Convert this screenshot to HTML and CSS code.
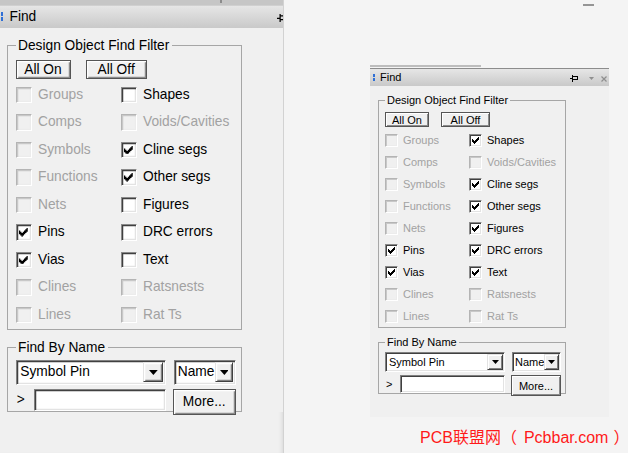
FILE: index.html
```html
<!DOCTYPE html>
<html>
<head>
<meta charset="utf-8">
<title>Find</title>
<link rel="stylesheet" href="styles.css">
</head>
<body>
<div class="page">
  <div class="left">
    <div class="strip"><i></i></div>
    <div class="panel big">
      <div class="title">
        <span class="grip"><i></i><i></i></span>
        <span class="tt">Find</span>
        <span class="tools">
          <svg class="pin" width="8" height="7" viewBox="0 0 8 7"><path d="M0 3h2v1H0zM2 0h1v7H2zM3 1h5v1H3zM3 4h5v1H3zM7 1h1v4H7z"/></svg>
          <svg class="drop" width="5" height="3" viewBox="0 0 5 3"><path d="M0 0h5L2.5 3z"/></svg>
          <svg class="close" width="6" height="6" viewBox="0 0 6 6"><path d="M0.5 0.5l5 5M5.5 0.5l-5 5"/></svg>
        </span>
      </div>
      <div class="pbody">
        <fieldset class="group filter">
          <legend>Design Object Find Filter</legend>
          <div class="btns"><button class="btn b-on">All On</button><button class="btn b-off">All Off</button></div>
          <div class="grid">
            <label class="cb dis"><span class="box"></span>Groups</label>
            <label class="cb"><span class="box"></span>Shapes</label>
            <label class="cb dis"><span class="box"></span>Comps</label>
            <label class="cb dis"><span class="box"></span>Voids/Cavities</label>
            <label class="cb dis"><span class="box"></span>Symbols</label>
            <label class="cb"><span class="box"><svg class="ck" width="7" height="7" viewBox="0 0 7 7"><path d="M0 2h1v3H0zM1 3h1v3H1zM2 4h1v3H2zM3 3h1v3H3zM4 2h1v3H4zM5 1h1v3H5zM6 0h1v3H6z"/></svg></span>Cline segs</label>
            <label class="cb dis"><span class="box"></span>Functions</label>
            <label class="cb"><span class="box"><svg class="ck" width="7" height="7" viewBox="0 0 7 7"><path d="M0 2h1v3H0zM1 3h1v3H1zM2 4h1v3H2zM3 3h1v3H3zM4 2h1v3H4zM5 1h1v3H5zM6 0h1v3H6z"/></svg></span>Other segs</label>
            <label class="cb dis"><span class="box"></span>Nets</label>
            <label class="cb"><span class="box"></span>Figures</label>
            <label class="cb"><span class="box"><svg class="ck" width="7" height="7" viewBox="0 0 7 7"><path d="M0 2h1v3H0zM1 3h1v3H1zM2 4h1v3H2zM3 3h1v3H3zM4 2h1v3H4zM5 1h1v3H5zM6 0h1v3H6z"/></svg></span>Pins</label>
            <label class="cb"><span class="box"></span>DRC errors</label>
            <label class="cb"><span class="box"><svg class="ck" width="7" height="7" viewBox="0 0 7 7"><path d="M0 2h1v3H0zM1 3h1v3H1zM2 4h1v3H2zM3 3h1v3H3zM4 2h1v3H4zM5 1h1v3H5zM6 0h1v3H6z"/></svg></span>Vias</label>
            <label class="cb"><span class="box"></span>Text</label>
            <label class="cb dis"><span class="box"></span>Clines</label>
            <label class="cb dis"><span class="box"></span>Ratsnests</label>
            <label class="cb dis"><span class="box"></span>Lines</label>
            <label class="cb dis"><span class="box"></span>Rat Ts</label>
          </div>
        </fieldset>
        <fieldset class="group byname">
          <legend>Find By Name</legend>
          <div class="row row1">
            <div class="combo c1"><span class="val">Symbol Pin</span><span class="dd"><svg width="7" height="4" viewBox="0 0 7 4"><path d="M0 0h7L3.5 4z"/></svg></span></div>
            <div class="combo c2"><span class="val">Name</span><span class="dd"><svg width="7" height="4" viewBox="0 0 7 4"><path d="M0 0h7L3.5 4z"/></svg></span></div>
          </div>
          <div class="row row2">
            <span class="prompt">&gt;</span>
            <span class="input"></span>
            <button class="btn more">More...</button>
          </div>
        </fieldset>
      </div>
    </div>
  </div>

  <div class="right">
    <div class="dash"></div>
    <div class="topline"></div>
    <div class="panel small">
      <div class="title">
        <span class="grip"><i></i><i></i></span>
        <span class="tt">Find</span>
        <span class="tools">
          <svg class="pin" width="8" height="7" viewBox="0 0 8 7"><path d="M0 3h2v1H0zM2 0h1v7H2zM3 1h5v1H3zM3 4h5v1H3zM7 1h1v4H7z"/></svg>
          <svg class="drop" width="5" height="3" viewBox="0 0 5 3"><path d="M0 0h5L2.5 3z"/></svg>
          <svg class="close" width="6" height="6" viewBox="0 0 6 6"><path d="M0.5 0.5l5 5M5.5 0.5l-5 5"/></svg>
        </span>
      </div>
      <div class="pbody">
        <fieldset class="group filter">
          <legend>Design Object Find Filter</legend>
          <div class="btns"><button class="btn b-on">All On</button><button class="btn b-off">All Off</button></div>
          <div class="grid">
            <label class="cb dis"><span class="box"></span>Groups</label>
            <label class="cb"><span class="box"><svg class="ck" width="7" height="7" viewBox="0 0 7 7"><path d="M0 2h1v3H0zM1 3h1v3H1zM2 4h1v3H2zM3 3h1v3H3zM4 2h1v3H4zM5 1h1v3H5zM6 0h1v3H6z"/></svg></span>Shapes</label>
            <label class="cb dis"><span class="box"></span>Comps</label>
            <label class="cb dis"><span class="box"></span>Voids/Cavities</label>
            <label class="cb dis"><span class="box"></span>Symbols</label>
            <label class="cb"><span class="box"><svg class="ck" width="7" height="7" viewBox="0 0 7 7"><path d="M0 2h1v3H0zM1 3h1v3H1zM2 4h1v3H2zM3 3h1v3H3zM4 2h1v3H4zM5 1h1v3H5zM6 0h1v3H6z"/></svg></span>Cline segs</label>
            <label class="cb dis"><span class="box"></span>Functions</label>
            <label class="cb"><span class="box"><svg class="ck" width="7" height="7" viewBox="0 0 7 7"><path d="M0 2h1v3H0zM1 3h1v3H1zM2 4h1v3H2zM3 3h1v3H3zM4 2h1v3H4zM5 1h1v3H5zM6 0h1v3H6z"/></svg></span>Other segs</label>
            <label class="cb dis"><span class="box"></span>Nets</label>
            <label class="cb"><span class="box"><svg class="ck" width="7" height="7" viewBox="0 0 7 7"><path d="M0 2h1v3H0zM1 3h1v3H1zM2 4h1v3H2zM3 3h1v3H3zM4 2h1v3H4zM5 1h1v3H5zM6 0h1v3H6z"/></svg></span>Figures</label>
            <label class="cb"><span class="box"><svg class="ck" width="7" height="7" viewBox="0 0 7 7"><path d="M0 2h1v3H0zM1 3h1v3H1zM2 4h1v3H2zM3 3h1v3H3zM4 2h1v3H4zM5 1h1v3H5zM6 0h1v3H6z"/></svg></span>Pins</label>
            <label class="cb"><span class="box"><svg class="ck" width="7" height="7" viewBox="0 0 7 7"><path d="M0 2h1v3H0zM1 3h1v3H1zM2 4h1v3H2zM3 3h1v3H3zM4 2h1v3H4zM5 1h1v3H5zM6 0h1v3H6z"/></svg></span>DRC errors</label>
            <label class="cb"><span class="box"><svg class="ck" width="7" height="7" viewBox="0 0 7 7"><path d="M0 2h1v3H0zM1 3h1v3H1zM2 4h1v3H2zM3 3h1v3H3zM4 2h1v3H4zM5 1h1v3H5zM6 0h1v3H6z"/></svg></span>Vias</label>
            <label class="cb"><span class="box"><svg class="ck" width="7" height="7" viewBox="0 0 7 7"><path d="M0 2h1v3H0zM1 3h1v3H1zM2 4h1v3H2zM3 3h1v3H3zM4 2h1v3H4zM5 1h1v3H5zM6 0h1v3H6z"/></svg></span>Text</label>
            <label class="cb dis"><span class="box"></span>Clines</label>
            <label class="cb dis"><span class="box"></span>Ratsnests</label>
            <label class="cb dis"><span class="box"></span>Lines</label>
            <label class="cb dis"><span class="box"></span>Rat Ts</label>
          </div>
        </fieldset>
        <fieldset class="group byname">
          <legend>Find By Name</legend>
          <div class="row row1">
            <div class="combo c1"><span class="val">Symbol Pin</span><span class="dd"><svg width="7" height="4" viewBox="0 0 7 4"><path d="M0 0h7L3.5 4z"/></svg></span></div>
            <div class="combo c2"><span class="val">Name</span><span class="dd"><svg width="7" height="4" viewBox="0 0 7 4"><path d="M0 0h7L3.5 4z"/></svg></span></div>
          </div>
          <div class="row row2">
            <span class="prompt">&gt;</span>
            <span class="input"></span>
            <button class="btn more">More...</button>
          </div>
        </fieldset>
      </div>
    </div>
    <div class="mark">PCB联盟网（<span class="site">Pcbbar.com</span><span class="close-paren">）</span></div>
  </div>
</div>
</body>
</html>
```

FILE: styles.css
```css
* { box-sizing: border-box; }
html, body { margin: 0; padding: 0; }
body {
  width: 628px;
  height: 453px;
  overflow: hidden;
  background: #f4f4f4;
  font-family: "Liberation Sans", Arial, sans-serif;
  font-size: 11px;
  color: #000;
}
.page { display: flex; height: 453px; }

/* left (enlarged) dock */
.left {
  width: 284px;
  flex: none;
  height: 453px;
  overflow: hidden;
  background: #f0f0f0;
  border-right: 1px solid #d2d2d2;
  box-shadow: inset -4px 0 4px -3px rgba(0,0,0,0.10);
}
.strip { height: 5px; background: #c6c6c6; padding-left: 220px; }
.strip i { display: block; width: 2px; height: 3px; background: #8c8c8c; }

.panel { background: #f0f0f0; width: 239px; }
.panel.big { zoom: 1.25; width: 263px; margin-left: -2.4px; }

.title {
  height: 18px;
  border-top: 1px solid #8c8c8c;
  background: linear-gradient(#e6e6e6, #c9c9c9);
  display: flex;
  align-items: center;
  padding-left: 3px;
}
.big .title { border-top-color: #d0d0d0; }
.grip { display: flex; flex-direction: column; gap: 1px; width: 2px; margin-right: 5px; }
.grip i { display: block; width: 2px; height: 3px; background: #2f6fd6; }
.tt { line-height: 13px; }
.tools { margin-left: auto; display: flex; align-items: center; padding-right: 2px; padding-top: 2px; }
.pin { margin-right: 11px; fill: #000; }
.drop { margin-right: 7px; fill: #8f8f8f; }
.close { stroke: #8f8f8f; stroke-width: 1.2; fill: none; }

.pbody { padding: 8px 0 0 8px; height: 331px; }
.big .pbody { height: auto; }

.group {
  margin: 0;
  padding: 5px 0 0 6px;
  border: 1px solid #a6a6a6;
  width: 188px;
  min-width: 0;
}
legend {
  padding: 0 2px;
  margin-left: 0;
  line-height: 13px;
  font-size: 11px;
}

.btns { display: flex; gap: 12px; height: 15px; }
.btn {
  font-family: "Liberation Sans", Arial, sans-serif;
  font-size: 11px;
  line-height: 12px;
  height: 15px;
  padding: 0;
  margin: 0;
  color: #000;
  background: #f0f0f0;
  border: 1px solid #555;
  box-shadow: inset 1px 1px 0 #fff, inset -1px -1px 0 #8c8c8c;
  border-radius: 0;
}
.b-on { width: 44px; }
.b-off { width: 49px; }

.grid {
  display: grid;
  grid-template-columns: 84px auto;
  grid-auto-rows: 22px;
  align-items: center;
  margin-top: 2px;
}
.cb { display: flex; align-items: center; gap: 5px; line-height: 13px; white-space: nowrap; }
.cb.dis { color: #a2a2a2; }
.box {
  width: 13px;
  height: 13px;
  flex: none;
  background: #fff;
  border: 1px solid;
  border-color: #8a8a8a #fff #fff #8a8a8a;
  box-shadow: inset 1px 1px 0 #404040, inset -1px -1px 0 #e3e3e3;
  display: flex;
  align-items: center;
  justify-content: center;
}
.dis .box {
  background: #f0f0f0;
  border-color: #b4b4b4 #fff #fff #b4b4b4;
  box-shadow: inset 1px 1px 0 #c8c8c8, inset -1px -1px 0 #ececec;
}
.ck { fill: #000; display: block; }

.byname { margin-top: 8px; padding: 3px 0 0 6px; }
.row { display: flex; align-items: flex-start; }
.row1 { gap: 7px; height: 20px; }
.row2 { margin-top: 3px; height: 18px; }

.combo {
  height: 20px;
  background: #fff;
  border: 1px solid;
  border-color: #808080 #fff #fff #808080;
  box-shadow: inset 1px 1px 0 #404040, inset -1px -1px 0 #e3e3e3;
  display: flex;
  align-items: center;
  padding: 1px 1px 1px 3px;
}
.combo .val { flex: 1; min-width: 0; overflow: hidden; white-space: nowrap; line-height: 13px; }
.c1 { width: 120px; }
.c2 { width: 49px; padding-left: 2px; }
.c2 .val { overflow: visible; }
.c2 .dd { width: 15px; }
.dd {
  width: 16px;
  height: 16px;
  flex: none;
  background: #f0f0f0;
  border: 1px solid;
  border-color: #e3e3e3 #404040 #404040 #e3e3e3;
  box-shadow: inset 1px 1px 0 #fff, inset -1px -1px 0 #808080;
  display: flex;
  align-items: center;
  justify-content: center;
  position: relative;
}
.dd svg { fill: #000; display: block; }

.prompt { width: 15px; line-height: 18px; padding-left: 1px; }
.input {
  width: 105px;
  height: 18px;
  background: #fff;
  border: 1px solid;
  border-color: #808080 #fff #fff #808080;
  box-shadow: inset 1px 1px 0 #404040, inset -1px -1px 0 #e3e3e3;
}
.more { width: 50px; height: 21px; margin-left: 6px; flex: none; }

/* right side */
.right { display: flex; flex-direction: column; padding-left: 86px; }
.dash { width: 11px; height: 2px; background: #959595; margin-top: 4px; margin-left: 213px; }
.topline { width: 111px; height: 2px; background: #bdbdbd; margin-top: 59px; margin-bottom: 1px; }
.mark {
  margin-top: 11px;
  margin-left: 50px;
  font-family: "Liberation Sans", "Noto Sans CJK SC", sans-serif;
  font-size: 16px;
  line-height: 20px;
  color: #ff1a1a;
  white-space: nowrap;
}
.site { padding: 0 5px 0 7px; }
.close-paren { display: inline-block; width: 9px; overflow: visible; }
```
